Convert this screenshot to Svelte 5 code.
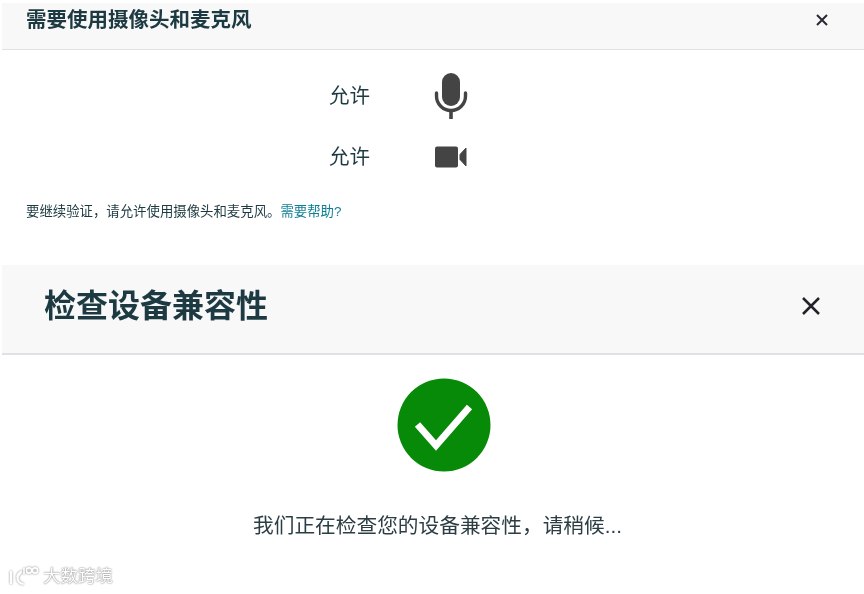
<script>
  const permissions = [
    { label: '允许', icon: 'mic' },
    { label: '允许', icon: 'camera' }
  ];
</script>

<main class="page">
  <section class="small">
    <header class="head">
      <h2>需要使用摄像头和麦克风</h2>
      <svg class="close" width="14" height="14" viewBox="0 0 14 14" fill="none" stroke="#2a2a35" stroke-width="2">
        <path d="M2 2l10 10M12 2L2 12" />
      </svg>
    </header>

    <div class="perms">
      {#each permissions as p}
        <div class="perm">
          <span class="perm-label">{p.label}</span>
          {#if p.icon === 'mic'}
            <svg width="34" height="46" viewBox="0 0 34 46">
              <rect x="8" y="0" width="18" height="33" rx="9" fill="#444" />
              <path d="M2.5 20v3a14.5 14.5 0 0 0 29 0v-3" fill="none" stroke="#444" stroke-width="3.4" stroke-linecap="round" />
              <path d="M17 37v9" stroke="#444" stroke-width="3.6" />
            </svg>
          {:else}
            <svg width="34" height="22" viewBox="0 0 34 22">
              <rect x="1" y="0.5" width="23" height="21" rx="2" fill="#444" />
              <path d="M26 8.5L32 2v18l-6-6.5z" fill="#444" stroke="#444" stroke-linejoin="round" />
            </svg>
          {/if}
        </div>
      {/each}
    </div>

    <p class="hint">要继续验证，请允许使用摄像头和麦克风。<span class="link">需要帮助?</span></p>
  </section>

  <section class="large">
    <header class="head">
      <h1>检查设备兼容性</h1>
      <svg class="close" width="22" height="22" viewBox="0 0 22 22" fill="none" stroke="#22222c" stroke-width="2.5">
        <path d="M3 3l16 16M19 3L3 19" />
      </svg>
    </header>

    <div class="status">
      <svg width="94" height="94" viewBox="0 0 94 94">
        <circle cx="47" cy="47" r="46.5" fill="#078a07" />
        <path d="M20.5 46.5L39 67.5 72.5 29" fill="none" stroke="#fff" stroke-width="7" />
      </svg>
      <p>我们正在检查您的设备兼容性，请稍候...</p>
    </div>
  </section>

  <div class="watermark">
    <svg class="wm-logo" width="30" height="20" viewBox="0 0 30 20" fill="none" stroke="#fff" stroke-width="2.2">
      <path d="M2 5v13" />
      <path d="M13 5.5a7 7 0 0 0-4.5 6.5 6.5 6.5 0 0 0 6 6" />
      <path d="M8 11l4-5" />
      <path d="M15 2v6" stroke-width="1.6" />
      <circle cx="20" cy="4.5" r="2.6" stroke-width="1.6" />
      <circle cx="26" cy="4.5" r="2.6" stroke-width="1.6" />
    </svg>
    <span>大数跨境</span>
  </div>
</main>

<style>
  :global(body) {
    margin: 0;
    background: #fff;
  }

  .page {
    position: relative;
    width: 864px;
    height: 594px;
    overflow: hidden;
    padding-top: 3px;
    box-sizing: border-box;
    font-family: "Liberation Sans", "Noto Sans CJK SC", sans-serif;
    color: #1d3a42;
    filter: blur(0.35px);
  }

  .head {
    display: flex;
    align-items: center;
    justify-content: space-between;
    margin-left: 2px;
    background: #f8f8f8;
    box-sizing: border-box;
  }

  h1, h2, p {
    margin: 0;
  }

  /* top dialog */
  .small {
    height: 262px;
  }

  .small .head {
    height: 47px;
    padding: 0 35px 12px 24px;
    border-bottom: 1px solid #e2e2e2;
  }

  h2 {
    font-size: 20.5px;
    font-weight: 700;
    line-height: 26px;
  }

  .perms {
    display: flex;
    flex-direction: column;
    margin: 15px 0 0 329px;
  }

  .perm {
    display: grid;
    grid-template-columns: 105px 34px;
    align-items: center;
    height: 61px;
  }

  .perm-label {
    padding-bottom: 4px;
    font-size: 20.5px;
  }

  .hint {
    margin: 16px 0 0 26px;
    font-size: 13.4px;
    line-height: 18px;
  }

  .link {
    color: #0f7f96;
  }

  /* bottom dialog */
  .large .head {
    height: 90px;
    padding: 0 42px 6px 42px;
    border-bottom: 2px solid #dfe1e6;
  }

  h1 {
    font-size: 32px;
    font-weight: 700;
    line-height: 40px;
  }

  .status {
    display: flex;
    flex-direction: column;
    align-items: flex-start;
    margin-top: 23px;
    padding-left: 253px;
  }

  .status svg {
    margin-left: 144px;
  }

  .status p {
    margin-top: 40px;
    font-size: 20.7px;
    line-height: 28px;
    color: #2c3e44;
  }

  .watermark {
    position: absolute;
    left: 9px;
    bottom: 7px;
    display: flex;
    align-items: center;
    gap: 4px;
    font-size: 17.5px;
    line-height: 22px;
    color: #fff;
    text-shadow: 0 0 2px #8a8a8a, 0 0 1px #8a8a8a;
  }

  .wm-logo {
    filter: drop-shadow(0 0 1px #8a8a8a);
  }
</style>
